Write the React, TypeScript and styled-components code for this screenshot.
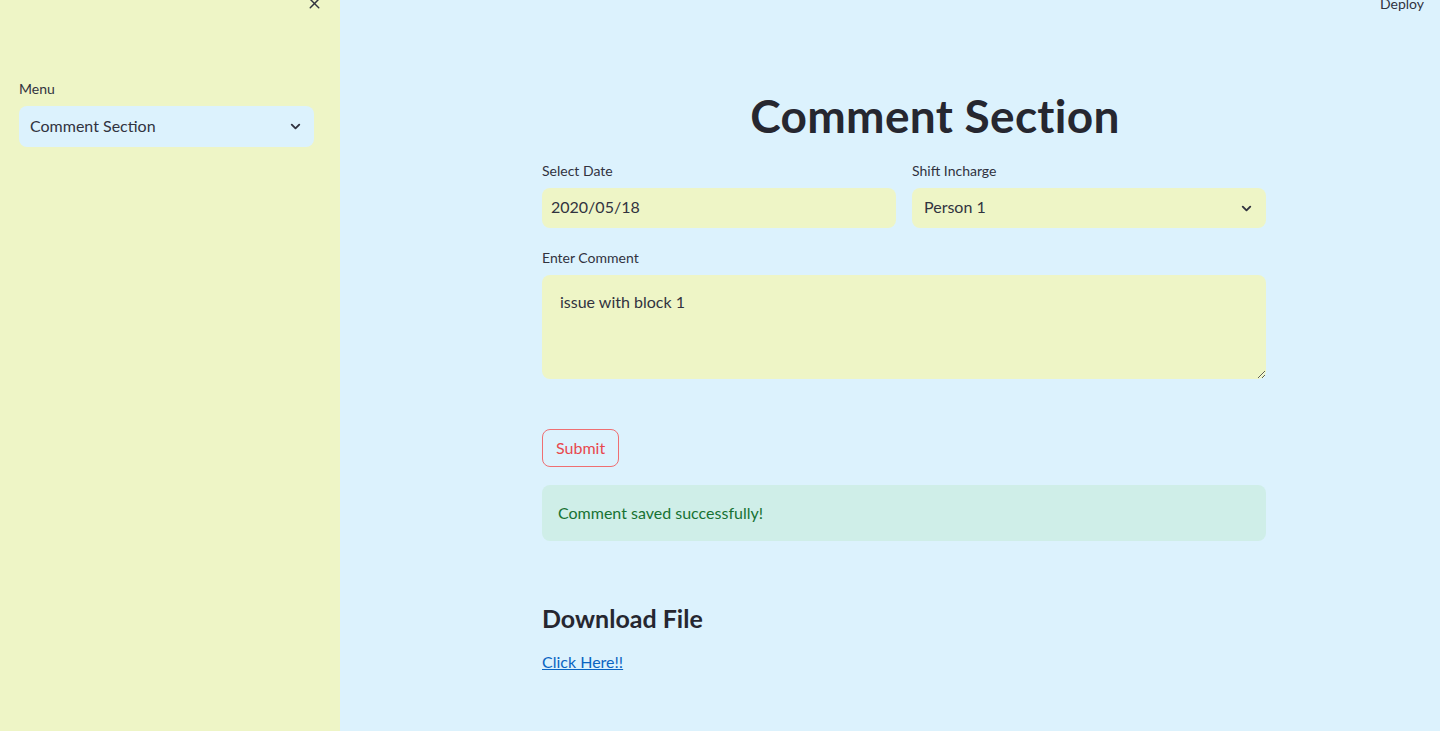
import styled, { createGlobalStyle } from "styled-components";
import { ChevronDown, X } from "lucide-react";

const GlobalStyle = createGlobalStyle`
  html, body {
    margin: 0;
    padding: 0;
    height: 100%;
    overflow: hidden;
  }
  body {
    font-family: Lato, "Liberation Sans", sans-serif;
    color: #31333f;
  }
  * {
    box-sizing: border-box;
  }
`;

const Shell = styled.div`
  display: flex;
  height: 731px;
`;

const Sidebar = styled.aside`
  position: relative;
  width: 340px;
  flex-shrink: 0;
  background: #eef5c6;
  padding: 79px 26px 0 19px;
`;

const CloseButton = styled.button`
  position: absolute;
  top: -5px;
  left: 306px;
  border: none;
  background: transparent;
  padding: 0;
  color: #31333f;
  display: flex;
`;

const Main = styled.main`
  position: relative;
  flex: 1;
  background: #dcf2fd;
  padding-left: 28px;
`;

const Deploy = styled.div`
  position: absolute;
  top: -6px;
  right: 16px;
  font-size: 14px;
  line-height: 20px;
  color: #31333f;
`;

const Content = styled.div`
  width: 724px;
  margin: 0 auto;
  padding-top: 80px;
  display: flex;
  flex-direction: column;
`;

const Title = styled.h1`
  margin: 0 0 9px;
  padding-left: 62px;
  text-align: center;
  font-size: 46px;
  line-height: 72px;
  font-weight: 700;
  letter-spacing: 0.3px;
  color: #262730;
`;

const Row = styled.div`
  display: grid;
  grid-template-columns: 1fr 1fr;
  gap: 16px;
`;

const Field = styled.div<{ $top?: number }>`
  display: flex;
  flex-direction: column;
  margin-top: ${(p) => p.$top ?? 0}px;
`;

const Label = styled.label`
  font-size: 14px;
  line-height: 20px;
  margin-bottom: 7px;
  color: #31333f;
`;

const Box = styled.div<{ $bg: string; $pad: number; $h: number }>`
  display: flex;
  align-items: center;
  justify-content: space-between;
  height: ${(p) => p.$h}px;
  padding: 0 ${(p) => p.$pad}px;
  background: ${(p) => p.$bg};
  border-radius: 8px;
  font-size: 16px;
  line-height: 22px;
  color: #31333f;

  span {
    margin-top: -2px;
  }
`;

const TextArea = styled.textarea`
  height: 104px;
  width: 100%;
  border: none;
  outline: none;
  border-radius: 8px;
  background: #eef5c6;
  padding: 15px 18px;
  font-family: inherit;
  font-size: 16px;
  line-height: 24px;
  color: #31333f;
  resize: vertical;
`;

const SubmitButton = styled.button`
  align-self: flex-start;
  margin-top: 50px;
  height: 38px;
  padding: 0 13px 2px;
  border: 1px solid #ef6f72;
  border-radius: 8px;
  background: transparent;
  color: #e8474d;
  font-family: inherit;
  font-size: 16px;
`;

const Alert = styled.div`
  margin-top: 18px;
  height: 56px;
  display: flex;
  align-items: center;
  padding: 0 16px 2px;
  border-radius: 8px;
  background: #cfeee8;
  color: #177233;
  font-size: 16px;
`;

const SubHeading = styled.h3`
  margin: 57px 0 0;
  font-size: 25px;
  line-height: 40px;
  font-weight: 700;
  color: #262730;
`;

const Link = styled.a`
  margin-top: 12px;
  align-self: flex-start;
  font-size: 16px;
  line-height: 24px;
  color: #0a64c2;
  text-decoration: underline;
`;

export default function App() {
  return (
    <>
      <GlobalStyle />
      <Shell>
        <Sidebar>
          <CloseButton aria-label="Close sidebar">
            <X size={17} strokeWidth={2} />
          </CloseButton>
          <Field>
            <Label>Menu</Label>
            <Box $bg="#dcf2fd" $pad={11} $h={41}>
              <span>Comment Section</span>
              <ChevronDown size={15} strokeWidth={3} />
            </Box>
          </Field>
        </Sidebar>
        <Main>
          <Deploy>Deploy</Deploy>
          <Content>
            <Title>Comment Section</Title>
            <Row>
              <Field>
                <Label>Select Date</Label>
                <Box $bg="#eef5c6" $pad={9} $h={40}>
                  <span>2020/05/18</span>
                </Box>
              </Field>
              <Field>
                <Label>Shift Incharge</Label>
                <Box $bg="#eef5c6" $pad={12} $h={40}>
                  <span>Person 1</span>
                  <ChevronDown size={15} strokeWidth={3} />
                </Box>
              </Field>
            </Row>
            <Field $top={20}>
              <Label>Enter Comment</Label>
              <TextArea defaultValue="issue with block 1" />
            </Field>
            <SubmitButton>Submit</SubmitButton>
            <Alert>Comment saved successfully!</Alert>
            <SubHeading>Download File</SubHeading>
            <Link href="#">Click Here!!</Link>
          </Content>
        </Main>
      </Shell>
    </>
  );
}
